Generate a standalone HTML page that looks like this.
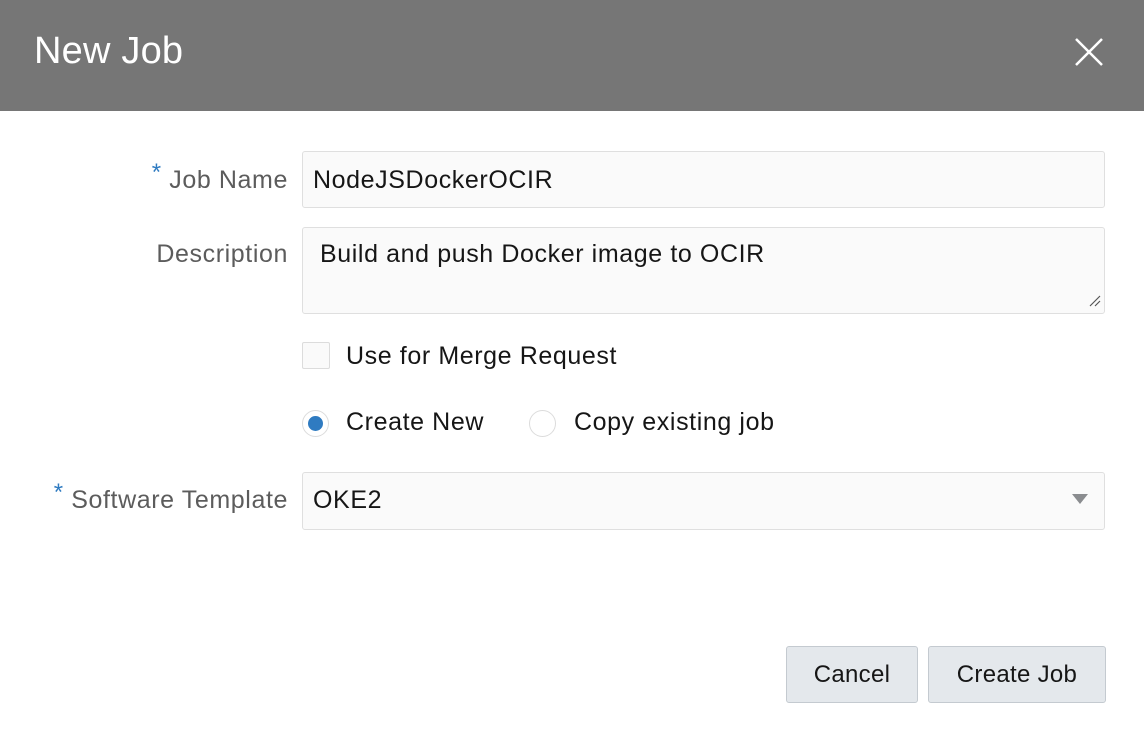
<!DOCTYPE html>
<html><head><style>
body{margin:0;width:1144px;height:744px;background:#fff;position:relative;overflow:hidden;font-family:"Liberation Sans",Arial,sans-serif;}
.hdr{position:absolute;left:0;top:0;width:1144px;height:111px;background:#767676;}
.t{position:absolute;white-space:nowrap;font-size:25px;letter-spacing:0.6px;}
.lbl{position:absolute;right:856px;font-size:25px;letter-spacing:0.6px;color:#5c5c5c;white-space:nowrap;}
.box{position:absolute;left:302px;width:801px;background:#fafafa;border:1px solid #dfdfdf;border-radius:3px;}
.btn{position:absolute;top:646px;height:55px;background:#e4e8ec;border:1px solid #c4cad0;border-radius:3px;font-size:24px;letter-spacing:0.3px;color:#161616;text-align:center;line-height:55px;}
.star{color:#2f7bc1;font-size:24px;}
</style></head><body>
<div class="hdr"></div>
<div class="t" style="left:34px;top:30px;font-size:38px;letter-spacing:0.2px;color:#fff;">New Job</div>
<svg style="position:absolute;left:1074px;top:37px" width="30" height="30"><path d="M2 2L28 28M28 2L2 28" stroke="#fff" stroke-width="2.5"/></svg>

<div class="lbl" style="top:166px;"><span class="star" style="position:relative;top:-8px;">*</span>&nbsp;Job Name</div>
<div class="box" style="top:151px;height:55px;"></div>
<div class="t" style="left:313px;top:166px;color:#161616;">NodeJSDockerOCIR</div>

<div class="lbl" style="top:240px;">Description</div>
<div class="box" style="top:227px;height:85px;"></div>
<div class="t" style="left:320px;top:240px;color:#161616;">Build and push Docker image to OCIR</div>
<svg style="position:absolute;left:1088px;top:294px" width="14" height="14"><path d="M2 12L12 2M7 12L12 7" stroke="#555" stroke-width="1.2"/></svg>

<div style="position:absolute;left:302px;top:342px;width:26px;height:25px;border:1px solid #dcdcdc;border-radius:2px;background:#fafafa;"></div>
<div class="t" style="left:346px;top:342px;color:#161616;">Use for Merge Request</div>

<div style="position:absolute;left:302px;top:410px;width:25px;height:25px;border:1px solid #dcdcdc;border-radius:50%;background:#fff;"></div>
<div style="position:absolute;left:308px;top:416px;width:15px;height:15px;border-radius:50%;background:#2f7bc1;"></div>
<div class="t" style="left:346px;top:408px;color:#161616;">Create New</div>
<div style="position:absolute;left:529px;top:410px;width:25px;height:25px;border:1px solid #dcdcdc;border-radius:50%;background:#fff;"></div>
<div class="t" style="left:574px;top:408px;color:#161616;">Copy existing job</div>

<div class="lbl" style="top:486px;"><span class="star" style="position:relative;top:-8px;">*</span>&nbsp;Software Template</div>
<div class="box" style="top:472px;height:56px;"></div>
<div class="t" style="left:313px;top:486px;color:#161616;">OKE2</div>
<svg style="position:absolute;left:1072px;top:494px" width="16" height="12"><path d="M0 0H16L8 10Z" fill="#8a8c8f"/></svg>

<div class="btn" style="left:786px;width:130px;">Cancel</div>
<div class="btn" style="left:928px;width:176px;">Create Job</div>
</body></html>
